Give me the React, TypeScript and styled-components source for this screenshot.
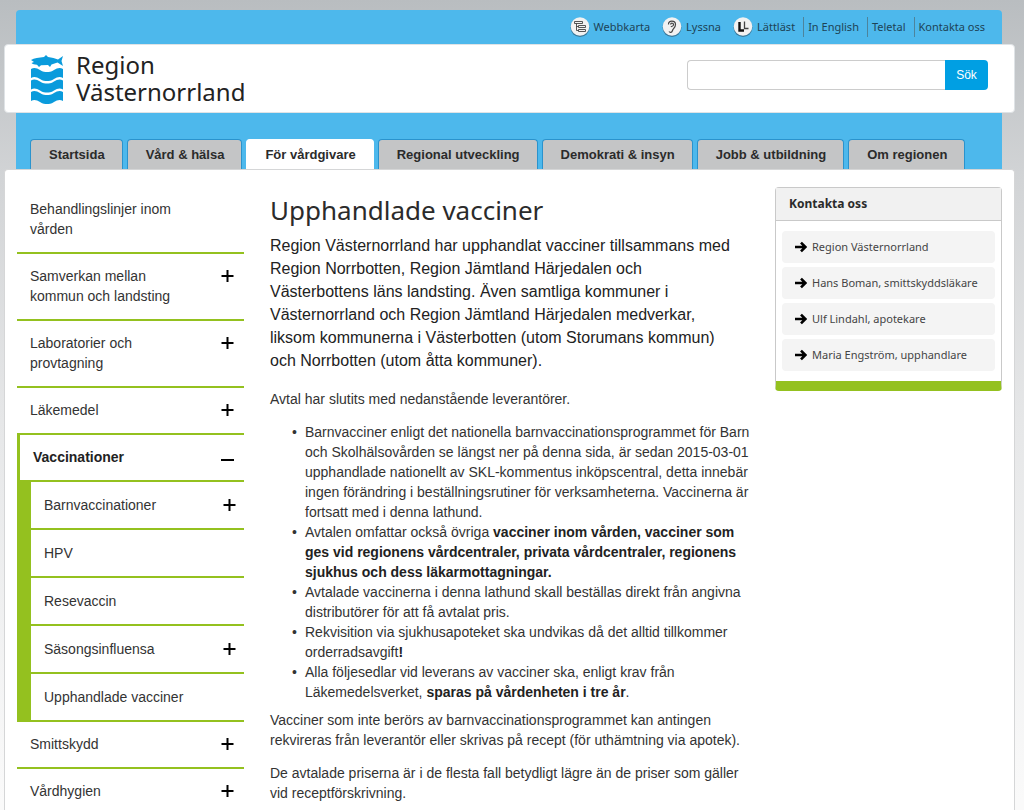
import React from "react";
import styled, { createGlobalStyle, css } from "styled-components";

const sans = '"Liberation Sans", Arial, sans-serif';
const humanist = '"Noto Sans", sans-serif';
const green = "#94c11f";

const Global = createGlobalStyle`
  *, *::before, *::after { box-sizing: border-box; }
  html { min-height: 100%; background: linear-gradient(#b9bdc0, #d2d4d6 180px, #e6e7e8 420px, #fafafa 800px) no-repeat #fff; }
  body { margin: 0; font: 14px/20px ${sans}; color: #333; }
  a { color: inherit; text-decoration: none; }
  ul { list-style: none; margin: 0; padding: 0; }
`;

const Page = styled.div`
  padding: 10px 9px 0 4px;
`;

const BlueBand = styled.div`
  margin: 0 13px 0 12px;
  background: #4db8ec;
  border-radius: 4px 4px 0 0;
`;

const TopLinks = styled.ul`
  display: flex;
  justify-content: flex-end;
  align-items: center;
  height: 34px;
  padding-right: 17px;
  font: 11px/20px ${humanist};
  color: #1d4356;
`;

const TopItem = styled.li<{ $divided?: boolean }>`
  margin-left: ${(p) => (p.$divided ? 8 : 12)}px;
  ${(p) => p.$divided && css`border-left: 1px solid #4d849c; padding-left: 4px;`}
`;

const TopLink = styled.a`
  display: flex;
  align-items: center;
  gap: 4px;
`;

const Header = styled.header`
  display: flex;
  justify-content: space-between;
  align-items: flex-start;
  margin: 0 -13px 0 -12px;
  min-height: 69px;
  padding: 10px 26px 0;
  background: #fff;
  border: 1px solid #dfe3e6;
  border-radius: 4px;
`;

const Logo = styled.a`
  display: flex;
  gap: 13px;
  font: 24px/27px ${humanist};
  color: #222;
`;

const LogoText = styled.span`
  display: block;
  margin-top: -4px;
`;

const Search = styled.form`
  display: flex;
  width: 301px;
  height: 30px;
  margin-top: 5px;
`;

const SearchInput = styled.input`
  flex: 1;
  min-width: 0;
  border: 1px solid #ccc;
  border-right: 0;
  border-radius: 4px 0 0 4px;
  padding: 0 8px;
  font: 14px ${sans};
`;

const SearchButton = styled.button`
  width: 43px;
  border: 0;
  border-radius: 0 4px 4px 0;
  background: #009fe3;
  color: #fff;
  font: 12px ${sans};
  padding: 0;
`;

const Tabs = styled.ul`
  display: flex;
  gap: 4px;
  padding: 26px 14px 0;
`;

const Tab = styled.a<{ $active?: boolean }>`
  display: block;
  height: 30px;
  padding: 0 17px 0 18px;
  font: bold 13px/30px ${sans};
  white-space: nowrap;
  color: #2b2b2b;
  background: ${(p) => (p.$active ? "#fff" : "#c4c5c6")};
  border: 1px solid ${(p) => (p.$active ? "#fff" : "#2a93cd")};
  border-bottom: 0;
  border-radius: 4px 4px 0 0;
`;

const Main = styled.div`
  display: flex;
  align-items: flex-start;
  padding: 17px 12px 0;
  background: #fff;
  border: 1px solid #d5d6d7;
  border-bottom: 0;
  border-radius: 4px 4px 0 0;
`;

const Side = styled.nav`
  flex: 0 0 227px;
`;

const Row = styled.a<{ $open?: boolean; $sub?: boolean }>`
  display: flex;
  justify-content: space-between;
  align-items: flex-start;
  padding: ${(p) => (p.$sub ? 13 : 12)}px ${(p) => (p.$sub ? 8 : 10)}px 13px 13px;
  border-bottom: 2px solid ${green};
  ${(p) => p.$open && css`border-left: 3px solid ${green}; font-weight: bold; color: #222;`}
`;

const RowText = styled.span`
  max-width: 150px;
`;

const SubList = styled.ul`
  border-left: 14px solid ${green};
`;

const Article = styled.article`
  flex: 1;
  min-width: 0;
  padding: 5px 22px 0 26px;
`;

const Title = styled.h1`
  margin: 0;
  font: 26px/36px ${humanist};
  color: #2b2b2b;
`;

const Lead = styled.p`
  margin: 6px 0 17px;
  padding-right: 14px;
  font-size: 16px;
  line-height: 23px;
  color: #222;
`;

const Text = styled.p`
  margin: 0 0 13px;
`;

const Bullets = styled.ul`
  margin-bottom: 8px;
  padding-left: 35px;
`;

const Bullet = styled.li`
  &::before { content: "•"; float: left; margin-left: -13px; }
`;

const Strong = styled.strong`
  color: #222;
`;

const Contact = styled.aside`
  flex: 0 0 227px;
  border: 1px solid #c9c9c9;
  border-bottom: 10px solid ${green};
  border-radius: 4px;
`;

const ContactTitle = styled.h2`
  margin: 0;
  padding: 0 13px;
  font: bold 12px/32px ${humanist};
  color: #2b2b2b;
  background: #f1f1f1;
  border-bottom: 1px solid #c9c9c9;
`;

const ContactList = styled.ul`
  display: grid;
  gap: 4px;
  padding: 10px 6px;
`;

const ContactLink = styled.a`
  display: flex;
  align-items: center;
  gap: 5px;
  height: 32px;
  padding-left: 13px;
  background: #f4f4f4;
  border-radius: 4px;
  font: 11px/20px ${humanist};
  white-space: nowrap;
  color: #444;
`;

const Arrow = () => (
  <svg width="12" height="12" viewBox="0 0 12 12" fill="none" stroke="#000" strokeWidth="2.6" aria-hidden="true">
    <path d="M0 6h10M6 1.6 10.4 6 6 10.4" />
  </svg>
);

const Sign = ({ open }: { open?: boolean }) => (
  <svg width="13" height="20" viewBox="0 0 13 20" stroke="#000" strokeWidth="2" aria-hidden="true">
    <path d={open ? "M0 13h13" : "M0.5 10h12M6.5 4v12"} />
  </svg>
);

const wave = (y: number) =>
  `M0 ${y}c3-2 6-1 9 1s5 2 7 2 4 0 7-2 6-3 9-1v9c-3-2-6-1-9 1s-5 2-7 2-4 0-7-2-6-3-9-1z`;

const Crest = () => (
  <svg width="32" height="49" viewBox="0 0 32 49" fill="#0a9bdc" aria-hidden="true">
    <path d="M0 5C3 3 8 2.500 13 2l2-2 2 2c4 .5 7 1.500 10 2.500L32 1l-1.500 5L32 11l-5.500-3.500c-2 .8-4 1.500-6 2L19 12l-2-2-7 .3L8 12l-2-2.200C3.500 9.500 1.500 9 .5 8L3 7z" />
    <path d={wave(14)} />
    <path d={wave(25.500)} />
    <path d={wave(37)} />
  </svg>
);

const Badge = ({ kind }: { kind: string }) => (
  <svg width="20" height="20" viewBox="0 0 20 20" fill="none" stroke="#444" aria-hidden="true">
    <circle cx="10" cy="10.5" r="9.5" fill="#39789a" stroke="none" />
    <circle cx="10" cy="9.5" r="9.3" fill="#f2f2f2" stroke="none" />
    {kind === "map" && (
      <path strokeWidth=".9" d="M4.500 4.500h8v2h-8zM8.500 8.500h7v2h-7zM8.500 12.500h7v2h-7zM6.500 6.500v7h2M6.500 9.500h2" />
    )}
    {kind === "ear" && (
      <path strokeWidth="1.2" d="M6.500 7.500C6 3 13.500 3 13.500 7.500c0 3-2.500 4-3 6-.5 2-2.500 2.500-3.500 1M8.500 7.500c.5-2 3.500-1.500 3 .5-.3 1.500-2 1-2.500 2" />
    )}
    {kind === "easy" && (
      <>
        <path strokeWidth="2.4" stroke="#111" d="M6.500 5v8.500h4.500" />
        <path strokeWidth="1.3" d="M11.500 4.500v7h4" />
      </>
    )}
  </svg>
);

const topLinks = [
  ["Webbkarta", "map"],
  ["Lyssna", "ear"],
  ["Lättläst", "easy"],
  ["In English", ""],
  ["Teletal", ""],
  ["Kontakta oss", ""],
];

const tabs = ["Startsida", "Vård & hälsa", "För vårdgivare", "Regional utveckling", "Demokrati & insyn", "Jobb & utbildning", "Om regionen"];

type Item = { label: string; more?: boolean; open?: boolean; children?: Item[] };

const menu: Item[] = [
  { label: "Behandlingslinjer inom vården" },
  { label: "Samverkan mellan kommun och landsting", more: true },
  { label: "Laboratorier och provtagning", more: true },
  { label: "Läkemedel", more: true },
  {
    label: "Vaccinationer",
    open: true,
    children: [
      { label: "Barnvaccinationer", more: true },
      { label: "HPV" },
      { label: "Resevaccin" },
      { label: "Säsongsinfluensa", more: true },
      { label: "Upphandlade vacciner" },
    ],
  },
  { label: "Smittskydd", more: true },
  { label: "Vårdhygien", more: true },
];

const contacts = ["Region Västernorrland", "Hans Boman, smittskyddsläkare", "Ulf Lindahl, apotekare", "Maria Engström, upphandlare"];

const MenuItem = ({ item, sub }: { item: Item; sub?: boolean }) => (
  <li>
    <Row href="#" $open={item.open} $sub={sub}>
      <RowText>{item.label}</RowText>
      {(item.more || item.open) && <Sign open={item.open} />}
    </Row>
    {item.children && (
      <SubList>
        {item.children.map((c) => (
          <MenuItem key={c.label} item={c} sub />
        ))}
      </SubList>
    )}
  </li>
);

export default function App() {
  return (
    <Page>
      <Global />
      <BlueBand>
        <TopLinks>
          {topLinks.map(([label, kind]) => (
            <TopItem key={label} $divided={!kind}>
              <TopLink href="#">
                {kind && <Badge kind={kind} />}
                {label}
              </TopLink>
            </TopItem>
          ))}
        </TopLinks>
        <Header>
          <Logo href="#">
            <Crest />
            <LogoText>
              Region
              <br />
              Västernorrland
            </LogoText>
          </Logo>
          <Search>
            <SearchInput type="text" aria-label="Sök på webbplatsen" />
            <SearchButton type="button">Sök</SearchButton>
          </Search>
        </Header>
        <nav>
          <Tabs>
            {tabs.map((t) => (
              <li key={t}>
                <Tab href="#" $active={t === "För vårdgivare"}>{t}</Tab>
              </li>
            ))}
          </Tabs>
        </nav>
      </BlueBand>
      <Main>
        <Side>
          <ul>
            {menu.map((m) => (
              <MenuItem key={m.label} item={m} />
            ))}
          </ul>
        </Side>
        <Article>
          <Title>Upphandlade vacciner</Title>
          <Lead>
            Region Västernorrland har upphandlat vacciner tillsammans med Region Norrbotten, Region Jämtland Härjedalen och
            Västerbottens läns landsting. Även samtliga kommuner i Västernorrland och Region Jämtland Härjedalen medverkar,
            liksom kommunerna i Västerbotten (utom Storumans kommun) och Norrbotten (utom åtta kommuner).
          </Lead>
          <Text>Avtal har slutits med nedanstående leverantörer.</Text>
          <Bullets>
            <Bullet>
              Barnvacciner enligt det nationella barnvaccinationsprogrammet för Barn och Skolhälsovården se längst ner på
              denna sida, är sedan 2015-03-01 upphandlade nationellt av SKL-kommentus inköpscentral, detta innebär ingen
              förändring i beställningsrutiner för verksamheterna. Vaccinerna är fortsatt med i denna lathund.
            </Bullet>
            <Bullet>
              Avtalen omfattar också övriga{" "}
              <Strong>
                vacciner inom vården, vacciner som ges vid regionens vårdcentraler, privata vårdcentraler, regionens sjukhus
                och dess läkarmottagningar.
              </Strong>
            </Bullet>
            <Bullet>
              Avtalade vaccinerna i denna lathund skall beställas direkt från angivna distributörer för att få avtalat pris.
            </Bullet>
            <Bullet>
              Rekvisition via sjukhusapoteket ska undvikas då det alltid tillkommer orderradsavgift<Strong>!</Strong>
            </Bullet>
            <Bullet>
              Alla följesedlar vid leverans av vacciner ska, enligt krav från Läkemedelsverket,{" "}
              <Strong>sparas på vårdenheten i tre år</Strong>.
            </Bullet>
          </Bullets>
          <Text>
            Vacciner som inte berörs av barnvaccinationsprogrammet kan antingen rekvireras från leverantör eller skrivas på
            recept (för uthämtning via apotek).
          </Text>
          <Text>
            De avtalade priserna är i de flesta fall betydligt lägre än de priser som gäller vid receptförskrivning.
          </Text>
        </Article>
        <Contact>
          <ContactTitle>Kontakta oss</ContactTitle>
          <ContactList>
            {contacts.map((c) => (
              <li key={c}>
                <ContactLink href="#">
                  <Arrow />
                  {c}
                </ContactLink>
              </li>
            ))}
          </ContactList>
        </Contact>
      </Main>
    </Page>
  );
}
